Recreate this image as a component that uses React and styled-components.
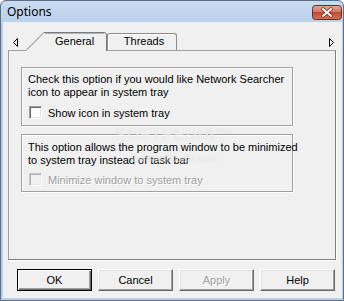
import React from 'react';
import styled, { createGlobalStyle } from 'styled-components';

const GlobalStyle = createGlobalStyle`
  html, body {
    margin: 0;
    padding: 0;
    background: #ffffff;
  }
  body {
    font-family: "Liberation Sans", Arial, sans-serif;
    font-size: 11px;
    color: #000;
  }
`;

const Window = styled.div`
  position: relative;
  width: 344px;
  height: 301px;
  box-sizing: border-box;
  display: flex;
  flex-direction: column;
  padding: 0 1px 2px 2px;
  border: 1px solid #5d6e86;
  border-radius: 6px 6px 0 0;
  background: linear-gradient(#c8dbf1, #b9d1ea 22px, #b9d1ea);
`;

const TitleBar = styled.div`
  height: 21px;
  display: flex;
  align-items: center;
  padding-left: 4px;
`;

const Title = styled.div`
  flex: 1;
  font-family: "Noto Sans", "Liberation Sans", sans-serif;
  font-size: 12px;
  color: #000;
`;

const CloseButton = styled.div`
  width: 30px;
  height: 15px;
  margin-top: 1px;
  svg {
    display: block;
  }
`;

const Client = styled.div`
  flex: 1;
  display: flex;
  flex-direction: column;
  background: #f0f0f0;
`;

const TabRow = styled.div`
  height: 28px;
  display: flex;
  align-items: flex-end;
`;

const ArrowBox = styled.div`
  width: ${(p) => p.width}px;
  height: 28px;
  box-sizing: border-box;
  padding-top: 16px;
  padding-left: ${(p) => p.left}px;
  svg {
    display: block;
  }
`;

const Spacer = styled.div`
  flex: 1;
`;

const SelectedTab = styled.div`
  position: relative;
  z-index: 1;
  width: 81px;
  height: 19px;
  margin-bottom: -1px;
  box-sizing: border-box;
  padding: 3px 0 0 29px;
  line-height: 13px;
  svg {
    position: absolute;
    left: 0;
    top: 0;
  }
  span {
    position: relative;
  }
`;

const Tab = styled.div`
  width: 70px;
  height: 17px;
  box-sizing: border-box;
  border: 1px solid #8d8d8d;
  border-bottom: none;
  border-radius: 3px 3px 0 0;
  box-shadow: inset 1px 1px 0 #ffffff;
  background: #f0f0f0;
  text-align: center;
  line-height: 14px;
  padding-left: 4px;
`;

const Panel = styled.div`
  position: relative;
  width: 328px;
  height: 210px;
  margin-left: 5px;
  box-sizing: border-box;
  border: 1px solid #a0a0a0;
  border-right-color: #808080;
  border-bottom-color: #808080;
  box-shadow: 1px 1px 0 #ffffff;
  padding: 16px 0 0 12px;
`;

const Group = styled.div`
  width: 272px;
  height: ${(p) => p.height}px;
  margin-top: ${(p) => p.gap || 0}px;
  box-sizing: border-box;
  border: 1px solid #a0a0a0;
  box-shadow: 1px 1px 0 #ffffff, inset 1px 1px 0 #ffffff;
  padding: ${(p) => p.top}px 6px 0 6px;
`;

const Text = styled.div`
  line-height: 13px;
  white-space: nowrap;
`;

const CheckRow = styled.label`
  display: flex;
  align-items: center;
  margin-top: ${(p) => p.gap}px;
  height: 13px;
  color: ${(p) => (p.disabled ? '#a0a0a0' : '#000')};
  text-shadow: ${(p) => (p.disabled ? '1px 1px 0 #ffffff' : 'none')};
`;

const Box = styled.span`
  width: 13px;
  height: 13px;
  margin-left: 1px;
  margin-right: 6px;
  box-sizing: border-box;
  border: 1px solid;
  border-color: ${(p) =>
    p.disabled ? '#c4c4c4 #ffffff #ffffff #c4c4c4' : '#a0a0a0 #ffffff #ffffff #a0a0a0'};
  box-shadow: ${(p) =>
    p.disabled
      ? 'inset 1px 1px 0 #b4b4b4, inset -1px -1px 0 #e8e8e8'
      : 'inset 1px 1px 0 #696969, inset -1px -1px 0 #e3e3e3'};
  background: ${(p) => (p.disabled ? '#f0f0f0' : '#ffffff')};
`;

const Watermark = styled.div`
  position: absolute;
  left: 100px;
  top: 77px;
  width: 130px;
  text-align: center;
  pointer-events: none;
  color: rgba(255, 255, 255, 0.55);
  text-shadow: 0 0 1px rgba(170, 170, 170, 0.35);
  div:first-child {
    font-family: "Liberation Sans", sans-serif;
    font-weight: bold;
    font-size: 16px;
    line-height: 14px;
    letter-spacing: 1px;
  }
  div:last-child {
    margin-top: 12px;
    font-size: 10px;
    line-height: 10px;
  }
`;

const ButtonRow = styled.div`
  display: flex;
  gap: 6px;
  margin-top: 9px;
  padding-left: 14px;
`;

const Button = styled.div`
  width: 75px;
  height: 22px;
  box-sizing: border-box;
  display: flex;
  align-items: center;
  justify-content: center;
  background: #f0f0f0;
  border: 1px solid;
  border-color: ${(p) => (p.primary ? '#000000' : '#ffffff #696969 #696969 #ffffff')};
  box-shadow: ${(p) =>
    p.primary
      ? 'inset 1px 1px 0 #ffffff, inset -1px -1px 0 #696969, inset -2px -2px 0 #a0a0a0'
      : 'inset -1px -1px 0 #a0a0a0, inset 1px 1px 0 #e3e3e3'};
  color: ${(p) => (p.disabled ? '#a0a0a0' : '#000')};
  text-shadow: ${(p) => (p.disabled ? '1px 1px 0 #ffffff' : 'none')};
`;

function LeftArrow() {
  return (
    <svg width="6" height="9" viewBox="0 0 6 9">
      <path d="M4.5 0.5 L0.5 4.5 L4.5 8.5 Z" fill="#f0f0f0" stroke="#000" strokeWidth="1" />
    </svg>
  );
}

function RightArrow() {
  return (
    <svg width="6" height="9" viewBox="0 0 6 9">
      <path d="M0.5 0.5 L4.5 4.5 L0.5 8.5 Z" fill="#f0f0f0" stroke="#000" strokeWidth="1" />
    </svg>
  );
}

function CloseIcon() {
  return (
    <svg width="30" height="15" viewBox="0 0 30 15">
      <defs>
        <linearGradient id="closeGrad" x1="0" y1="0" x2="0" y2="1">
          <stop offset="0" stopColor="#e8a595" />
          <stop offset="0.45" stopColor="#d47866" />
          <stop offset="0.5" stopColor="#c24a33" />
          <stop offset="1" stopColor="#d2765a" />
        </linearGradient>
      </defs>
      <rect x="0.5" y="0.5" width="29" height="14" rx="3" fill="url(#closeGrad)" stroke="#6f2a20" />
      <path
        d="M11 4 L19 11 M19 4 L11 11"
        stroke="#5a2a22"
        strokeWidth="3.4"
        strokeLinecap="round"
      />
      <path d="M11 4 L19 11 M19 4 L11 11" stroke="#ffffff" strokeWidth="2" strokeLinecap="round" />
    </svg>
  );
}

function GeneralTabShape() {
  return (
    <svg width="81" height="19" viewBox="0 0 81 19">
      <path d="M0 18.5 L18 0.5 L78 0.5 Q80.5 0.5 80.5 3 L80.5 19 L0 19 Z" fill="#f0f0f0" />
      <path d="M0 18.5 L18 0.5 L78 0.5 Q80.5 0.5 80.5 3 L80.5 19" fill="none" stroke="#7a7a7a" />
      <path d="M19 1.5 L78 1.5" stroke="#b4b4b4" />
    </svg>
  );
}

export default function App() {
  return (
    <>
      <GlobalStyle />
      <Window>
        <TitleBar>
          <Title>Options</Title>
          <CloseButton>
            <CloseIcon />
          </CloseButton>
        </TitleBar>
        <Client>
          <TabRow>
            <ArrowBox width={23} left={10}>
              <LeftArrow />
            </ArrowBox>
            <SelectedTab>
              <GeneralTabShape />
              <span>General</span>
            </SelectedTab>
            <Tab>Threads</Tab>
            <Spacer />
            <ArrowBox width={18} left={5}>
              <RightArrow />
            </ArrowBox>
          </TabRow>
          <Panel>
            <Group height={59} top={5}>
              <Text>Check this option if you would like Network Searcher</Text>
              <Text>icon to appear in system tray</Text>
              <CheckRow gap={7}>
                <Box />
                Show icon in system tray
              </CheckRow>
            </Group>
            <Group height={58} top={6} gap={8}>
              <Text>This option allows the program window to be minimized</Text>
              <Text>to system tray instead of task bar</Text>
              <CheckRow gap={6} disabled>
                <Box disabled />
                Minimize window to system tray
              </CheckRow>
            </Group>
            <Watermark>
              <div>SOFTPEDIA™</div>
              <div>www.softpedia.com</div>
            </Watermark>
          </Panel>
          <ButtonRow>
            <Button primary>OK</Button>
            <Button>Cancel</Button>
            <Button disabled>Apply</Button>
            <Button>Help</Button>
          </ButtonRow>
        </Client>
      </Window>
    </>
  );
}
